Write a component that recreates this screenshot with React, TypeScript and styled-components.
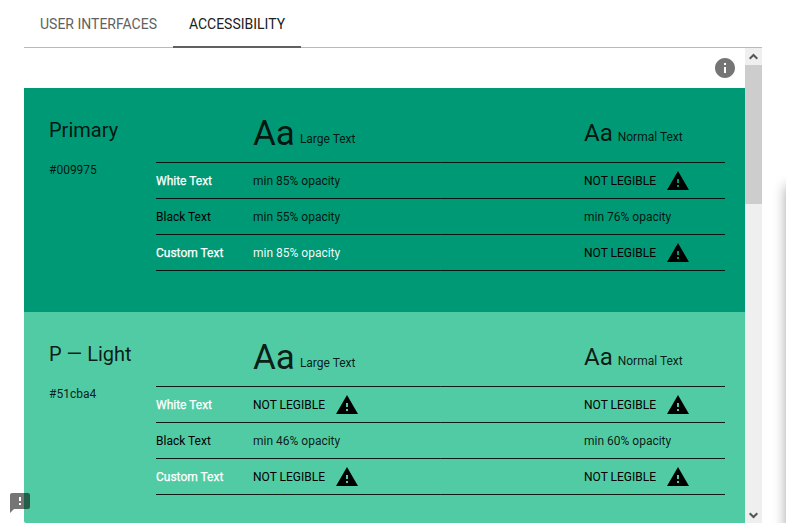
import React from "react";
import styled, { createGlobalStyle } from "styled-components";

const GlobalStyle = createGlobalStyle`
  * { box-sizing: border-box; }
  html, body { margin: 0; background: #fff; overflow: hidden; }
  body { font-family: Roboto, sans-serif; color: rgba(0, 0, 0, 0.87); }
  svg { display: block; }
`;

const Page = styled.div`
  position: relative;
  width: 786px;
  height: 523px;
  overflow: hidden;
  padding-left: 24px;
`;

const Panel = styled.main`
  width: 738px;
  height: 523px;
  display: flex;
  flex-direction: column;
`;

const Tabs = styled.nav`
  display: flex;
  flex: 0 0 48px;
  height: 48px;
  border-bottom: 1px solid #b9b9b9;
`;

const Tab = styled.button<{ $active?: boolean; $width: number }>`
  width: ${(p) => p.$width}px;
  height: 48px;
  margin-bottom: -1px;
  padding: 2px 0 0;
  border: 0;
  border-bottom: 2px solid ${(p) => (p.$active ? "#616161" : "transparent")};
  background: none;
  font: 400 14px/44px Roboto, sans-serif;
  color: ${(p) => (p.$active ? "#212121" : "#616161")};
  text-align: center;
  white-space: nowrap;
`;

const Body = styled.div`
  flex: 1;
  display: flex;
  min-height: 0;
`;

const Content = styled.div`
  width: 721px;
  overflow: hidden;
  display: flex;
  flex-direction: column;
`;

const InfoBar = styled.div`
  flex: 0 0 40px;
  display: flex;
  justify-content: flex-end;
  padding: 8px 8px 0 0;
`;

const Cards = styled.div`
  flex: 1;
  border-radius: 0 0 0 2px;
  overflow: hidden;
`;

const Card = styled.section<{ $color: string }>`
  display: flex;
  height: 224px;
  padding: 25px 20px 0 25px;
  background: ${(p) => p.$color};
`;

const Swatch = styled.div`
  width: 107px;
  padding-top: 3px;
`;

const Title = styled.h2`
  margin: 0;
  font-size: 20px;
  font-weight: 400;
  line-height: 28px;
`;

const Hex = styled.div`
  margin-top: 16px;
  font-size: 12px;
  line-height: 20px;
`;

const Table = styled.div`
  width: 569px;
`;

const Row = styled.div<{ $header?: boolean }>`
  display: grid;
  grid-template-columns: 97px 331px 141px;
  align-items: ${(p) => (p.$header ? "start" : "center")};
  height: ${(p) => (p.$header ? 50 : 36)}px;
  padding-bottom: 1px;
  background: linear-gradient(
      90deg,
      rgba(0, 0, 0, 0.87) 284px,
      rgba(0, 0, 0, 0.75) 284px 285px,
      rgba(0, 0, 0, 0.87) 285px
    )
    left bottom / 100% 1px no-repeat;
`;

const Sample = styled.div<{ $large?: boolean }>`
  display: flex;
  align-items: flex-end;
  gap: 5px;
  padding-top: ${(p) => (p.$large ? 1 : 6)}px;
  white-space: nowrap;
`;

const Specimen = styled.span<{ $large?: boolean }>`
  font-size: ${(p) => (p.$large ? 35 : 24)}px;
  line-height: ${(p) => (p.$large ? 40 : 28)}px;
`;

const Caption = styled.span<{ $large?: boolean }>`
  margin-bottom: ${(p) => (p.$large ? 5 : 0)}px;
  font-size: 12px;
  line-height: 20px;
`;

const Label = styled.div<{ $light?: boolean }>`
  font-size: 12px;
  font-weight: 400;
  line-height: 20px;
  color: ${(p) => (p.$light ? "#fff" : "#000")};
  -webkit-text-stroke: ${(p) => (p.$light ? "0.25px #fff" : "0")};
`;

const Value = styled.div<{ $tone: string }>`
  display: flex;
  align-items: center;
  gap: 10px;
  height: 35px;
  font-size: 12px;
  line-height: 20px;
  color: ${(p) => p.$tone};
  white-space: nowrap;
`;

const Scrollbar = styled.div`
  width: 17px;
  display: flex;
  flex-direction: column;
  background: #efefef;
`;

const Arrow = styled.div<{ $down?: boolean }>`
  height: 17px;
  padding: ${(p) => (p.$down ? "2px 0 0" : "0 0 1px")};
  display: flex;
  align-items: center;
  justify-content: center;
`;

const Thumb = styled.div`
  height: 139px;
  margin-bottom: auto;
  background: #cdcdcd;
`;

const Feedback = styled.button`
  position: absolute;
  left: 8px;
  top: 491px;
  padding: 0;
  border: 0;
  background: none;
`;

const SidePanel = styled.aside`
  position: absolute;
  left: 786px;
  top: 184px;
  width: 300px;
  height: 600px;
  box-shadow: 0 2px 12px rgba(0, 0, 0, 0.36);
`;

type Opacity = number | null;
type Color = {
  name: string;
  hex: string;
  rows: { label: string; light?: boolean; large: Opacity; normal: Opacity; tone?: string }[];
};

const colors: Color[] = [
  {
    name: "Primary",
    hex: "#009975",
    rows: [
      { label: "White Text", light: true, large: 85, normal: null },
      { label: "Black Text", large: 55, normal: 76 },
      { label: "Custom Text", light: true, large: 85, normal: null, tone: "rgba(255, 255, 255, 0.96)" },
    ],
  },
  {
    name: "P — Light",
    hex: "#51cba4",
    rows: [
      { label: "White Text", light: true, large: null, normal: null },
      { label: "Black Text", large: 46, normal: 60 },
      { label: "Custom Text", light: true, large: null, normal: null },
    ],
  },
];

const WarningIcon = () => (
  <svg width="24" height="24" viewBox="0 0 24 24" fill="#000">
    <path d="M1 21h22L12 2 1 21zm12-3h-2v-2h2v2zm0-4h-2v-4h2v4z" />
  </svg>
);

const Legibility = ({ opacity, tone }: { opacity: Opacity; tone?: string }) =>
  opacity === null ? (
    <Value $tone="#000">
      NOT LEGIBLE
      <WarningIcon />
    </Value>
  ) : (
    <Value $tone={tone ?? "rgba(0, 0, 0, 0.87)"}>min {opacity}% opacity</Value>
  );

const Chevron = ({ down }: { down?: boolean }) => (
  <svg width="9" height="7" viewBox="0 0 9 7" fill="none" stroke="#555" strokeWidth="2">
    <path d={down ? "M.7 1.2 4.5 5 8.3 1.2" : "M.7 5.8 4.5 2 8.3 5.8"} />
  </svg>
);

export default function App() {
  return (
    <>
      <GlobalStyle />
      <Page>
        <Panel>
          <Tabs>
            <Tab $width={149}>USER INTERFACES</Tab>
            <Tab $width={128} $active>ACCESSIBILITY</Tab>
          </Tabs>
          <Body>
            <Content>
              <InfoBar>
                <svg width="24" height="24" viewBox="0 0 24 24" fill="#757575">
                  <path d="M12 2C6.48 2 2 6.48 2 12s4.48 10 10 10 10-4.48 10-10S17.52 2 12 2zm1 15h-2v-6h2v6zm0-8h-2V7h2v2z" />
                </svg>
              </InfoBar>
              <Cards>
                {colors.map((c) => (
                  <Card key={c.hex} $color={c.hex}>
                    <Swatch>
                      <Title>{c.name}</Title>
                      <Hex>{c.hex}</Hex>
                    </Swatch>
                    <Table>
                      <Row $header>
                        <span />
                        <Sample $large>
                          <Specimen $large>Aa</Specimen>
                          <Caption $large>Large Text</Caption>
                        </Sample>
                        <Sample>
                          <Specimen>Aa</Specimen>
                          <Caption>Normal Text</Caption>
                        </Sample>
                      </Row>
                      {c.rows.map((r) => (
                        <Row key={r.label}>
                          <Label $light={r.light}>{r.label}</Label>
                          <Legibility opacity={r.large} tone={r.tone} />
                          <Legibility opacity={r.normal} />
                        </Row>
                      ))}
                    </Table>
                  </Card>
                ))}
              </Cards>
            </Content>
            <Scrollbar>
              <Arrow><Chevron /></Arrow>
              <Thumb />
              <Arrow $down><Chevron down /></Arrow>
            </Scrollbar>
          </Body>
        </Panel>
        <SidePanel />
        <Feedback aria-label="Feedback">
          <svg width="24" height="24" viewBox="0 0 24 24" fill="rgba(0,0,0,0.54)">
            <path d="M20 2H4c-1.1 0-1.99.9-1.99 2L2 22l4-4h14c1.1 0 2-.9 2-2V4c0-1.1-.9-2-2-2z" />
            <path fill="#fff" d="M11 6h2v4h-2zM11 12h2v2h-2z" />
          </svg>
        </Feedback>
      </Page>
    </>
  );
}
